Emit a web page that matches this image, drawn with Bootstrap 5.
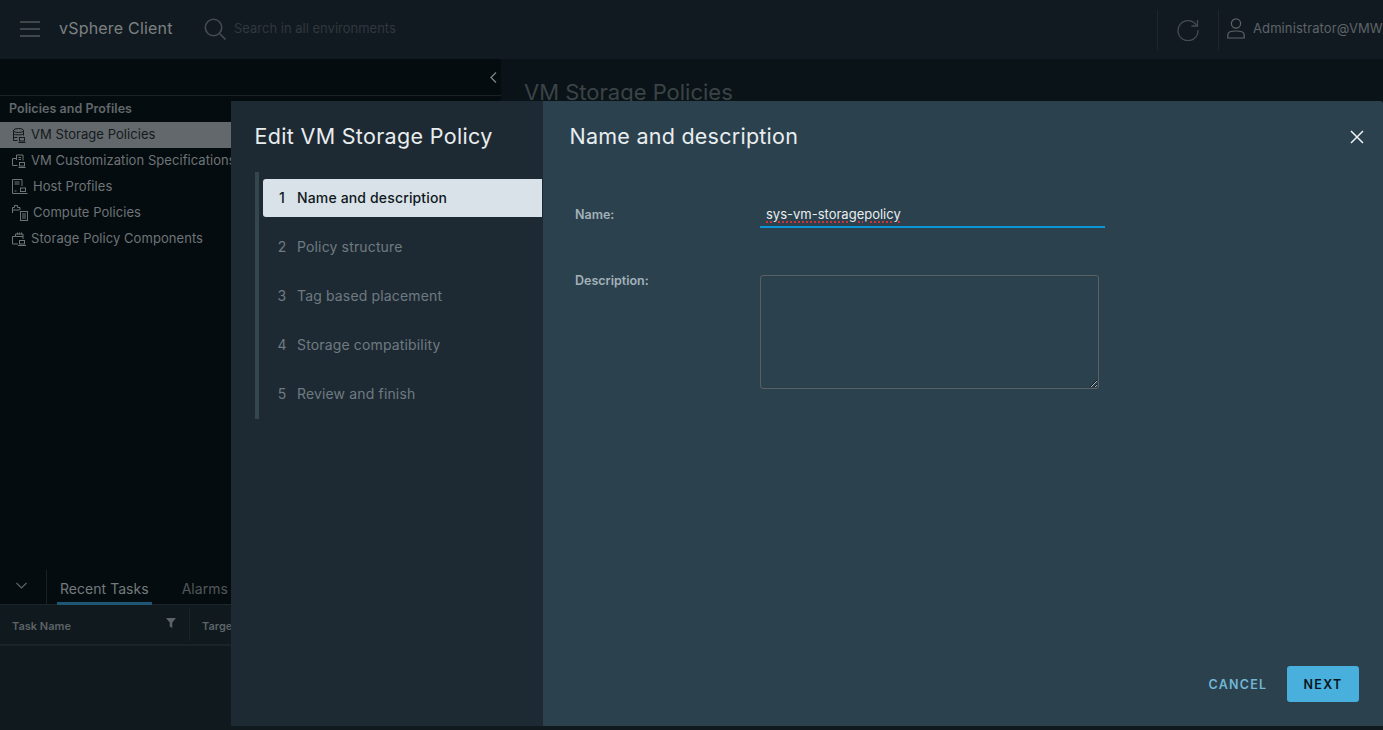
<!DOCTYPE html>
<html lang="en">
<head>
<meta charset="utf-8">
<title>Edit VM Storage Policy</title>
<link href="https://cdn.jsdelivr.net/npm/bootstrap@5.3.0/dist/css/bootstrap.min.css" rel="stylesheet">
<style>
html,body{height:100%;overflow:hidden}
body{background:#050c0f;font-family:Inter,"Noto Sans",sans-serif;color:#8b9092}
svg{display:block;flex:none;fill:none;stroke:currentColor}
.app-bar{height:59px;background:#121a21;color:#5c6366}
.menu-btn{width:59px;color:#50575a;padding-bottom:2px}
.brand{font-size:16px;color:#7c8183;letter-spacing:.2px;width:145px;padding-bottom:3px}
.search-icon{color:#454c50;margin-bottom:2px}
.search-text{font-size:13px;color:#2f383e;margin-left:8px;padding-bottom:2px}
.bar-sep{width:1px;height:40px;background:#1f272d}
.refresh{width:60px;color:#454c50}
.user{font-size:13px;color:#5e6467;white-space:nowrap;width:156px;padding-bottom:2px;letter-spacing:.1px}
.shell{height:511px}
.side{width:501px;background:#050c0f}
.collapse-row{height:37px;border-bottom:1px solid #1a2226;color:#7e8486;padding-right:4px}
.side-title{font-size:12.5px;font-weight:600;color:#62686b;padding:5px 0 5px 9px;line-height:16px;letter-spacing:.05px}
.side-item{height:26px;padding-left:12px;font-size:13px;color:#6e7477;white-space:nowrap;gap:5px;letter-spacing:.06px}
.side-item.on{background:#62686b;color:#14191c}
.content{background:#0a1317}
.content h1{font-size:22px;font-weight:400;color:#3b4347;margin:19px 0 0 23px;line-height:28px}
.dock{height:160px;background:#0f191e}
.dock-tabs{height:35px;background:#050c0f;border-bottom:1px solid #1d262b}
.dock-toggle{width:47px;border-right:1px solid #1a2226;color:#5e6467;padding:0 3px 3px 0}
.dock-tab{font-size:14px;color:#50575a;line-height:38px;height:35px;padding:0 3px;margin-left:10px;letter-spacing:.03px}
.dock-tab.on{color:#747a7d;border-bottom:3px solid #1f5673}
.dock-tab.next{margin-left:27px}
.grid-head{height:41px;border-bottom:2px solid #1a2328;font-size:11px;font-weight:600;color:#5d6366}
.cell{width:190px;padding-left:12px;padding-top:3px;color:#5d6366}
.cell.first{width:189px;padding-right:13px;padding-top:0}
.cell.first span{padding-top:3px}
.cell-sep{width:1px;height:33px;background:#1a2328}
.filter{fill:currentColor;stroke:none;margin-top:-4px}
.wizard{position:fixed;left:231px;top:101px;right:0;height:625px;background:#2b414e;border-radius:3px 3px 0 0}
.wiz-nav{width:312px;flex:none;background:#1e2a33;padding:23px 1px 0 24px}
.wiz-nav h2{font-size:21.5px;font-weight:400;color:#e9edef;line-height:24px;margin:0 0 24px -.5px;letter-spacing:.32px;white-space:nowrap}
.steps{border-left:4px solid #34474d;margin:0;padding:7px 0 0 4px;height:247px;list-style:none}
.step{height:38px;margin-bottom:11px;font-size:14px;color:#6e7a81;padding:0 0 2px 9px;white-space:nowrap;letter-spacing:.15px}
.step .n{width:20px;text-align:center;margin-right:5px}
.step.on{background:#d8e2e8;color:#10181c;border-radius:3px 0 0 3px;font-weight:500}
.wiz-body{padding:0 24px 24px 26.500px;color:#e9edef}
.wiz-body h3{font-size:21.5px;font-weight:400;line-height:24px;margin:23px 0 0;letter-spacing:.25px}
.close-x{position:absolute;right:18px;top:28px;width:16px;height:16px;padding:0;background:none;border:0;color:#eef2f4}
.f-label{width:190.500px;padding-left:5.500px;font-size:12.5px;font-weight:600;color:#a3b1b9;margin:0 0 2px}
.name-row{margin-top:51px;height:34px}
.name-input{width:345px;height:25px;margin-bottom:1px;background:transparent;border:0;border-bottom:2px solid #0b95d6;border-radius:0;padding:0 6px 2px;font-size:13px;line-height:22px;color:#e9edef;box-shadow:none}
.name-input span{text-decoration:underline dotted #d0343a 2px;text-underline-offset:2px}
.desc-row{margin-top:42px}
.desc-row .f-label{margin-top:-3px}
.desc-input{width:339px;height:114px;background:transparent;border:1px solid #5b6063;border-radius:3px;color:#e9edef;box-shadow:none}
.btn-cancel,.btn-next{font-size:12.5px;font-weight:600;letter-spacing:1.25px;height:36px;padding:2px 0 0;border-radius:3px;border:0}
.btn-cancel{color:#71b7d5;width:72px;background:none;margin-right:13px}
.btn-next{color:#0a161c;width:72px;background:#49afdd}
</style>
</head>
<body>
<header class="app-bar d-flex align-items-center">
  <div class="menu-btn d-flex justify-content-center">
    <svg width="20" height="16" viewBox="0 0 20 16" stroke-width="1.3"><path d="M0 1h20M0 8h20M0 15h20"/></svg>
  </div>
  <div class="brand">vSphere Client</div>
  <svg class="search-icon" width="22" height="22" viewBox="0 0 22 22" stroke-width="1.6"><circle cx="9.500" cy="9.500" r="8.200"/><path d="M15.500 15.500l6 6"/></svg>
  <div class="search-text flex-grow-1">Search in all environments</div>
  <div class="bar-sep"></div>
  <div class="refresh d-flex justify-content-center">
    <svg width="22" height="22" viewBox="0 0 22 22" stroke-width="1.3"><path d="M19.600 6.500A10 10 0 1 0 21 11"/><path d="M20.500 1v6h-6"/></svg>
  </div>
  <div class="bar-sep"></div>
  <div class="user d-flex align-items-center gap-2 ms-2">
    <svg width="18" height="21" viewBox="0 0 18 21" stroke-width="1.2"><circle cx="9" cy="5.500" r="4.600"/><path d="M.8 20v-3.200c0-2.400 3.400-3.800 8.200-3.800s8.200 1.400 8.200 3.800V20z"/></svg>
    <span>Administrator@VMW</span>
  </div>
</header>

<div class="shell d-flex">
  <aside class="side d-flex flex-column">
    <div class="collapse-row d-flex align-items-center justify-content-end">
      <svg width="7" height="11" viewBox="0 0 7 11" stroke-width="1.3"><path d="M6 .5L1 5.500l5 5"/></svg>
    </div>
    <div class="side-title">Policies and Profiles</div>
    <div class="side-item on d-flex align-items-center">
      <svg width="14" height="15" viewBox="0 0 14 15" stroke-width="1"><ellipse cx="6.500" cy="2.500" rx="5" ry="2"/><path d="M1.500 2.500v10h4M11.500 2.500v5M1.500 6c1.500 1.200 8.500 1.200 10 0M1.500 9.500h4"/><rect x="7.500" y="9.500" width="5" height="3.500"/><path d="M6.500 14.500h7"/></svg>
      <span>VM Storage Policies</span>
    </div>
    <div class="side-item d-flex align-items-center">
      <svg width="14" height="15" viewBox="0 0 14 15" stroke-width="1"><path d="M.5 4.500h4M.5 4.500v7h5M4.500 1h6.500v5.500M4.500 1v5"/><path d="M6.500 3.500h2.500M6.500 5.500h2.500"/><rect x="7.500" y="8.500" width="5" height="3.500"/><path d="M6.500 13.500h7"/></svg>
      <span>VM Customization Specifications</span>
    </div>
    <div class="side-item d-flex align-items-center">
      <svg width="16" height="16" viewBox="0 0 16 16" stroke-width="1"><path d="M8 14.500H.5V.5h9.500V7"/><path d="M2.500 3h5M2.500 5h5M2.500 12h2"/><rect x="8.500" y="9" width="5" height="3.500"/><path d="M7.500 14.500h8"/></svg>
      <span>Host Profiles</span>
    </div>
    <div class="side-item d-flex align-items-center">
      <svg width="16" height="16" viewBox="0 0 16 16" stroke-width="1"><path d="M.5 8V2.500h2V.5h3v2h2.500v2.500M.5 5h7"/><rect x="8.500" y="6.500" width="7" height="9"/><path d="M10 9h4M10 11h4M10 13h4"/></svg>
      <span>Compute Policies</span>
    </div>
    <div class="side-item d-flex align-items-center">
      <svg width="14" height="15" viewBox="0 0 14 15" stroke-width="1"><path d="M.5 4.500v7.500h5.500M.5 4.500h3V2h7.500v5M3.500 4.500h7.500"/><path d="M5.500.5v2M7.500.5v2M9.500.5v2"/><rect x="7.500" y="8.500" width="5" height="3.500"/><path d="M6 13.500h8"/></svg>
      <span>Storage Policy Components</span>
    </div>
  </aside>
  <main class="content flex-grow-1">
    <h1>VM Storage Policies</h1>
  </main>
</div>

<section class="dock">
  <div class="dock-tabs d-flex">
    <div class="dock-toggle d-flex align-items-center justify-content-center">
      <svg width="11" height="7" viewBox="0 0 11 7" stroke-width="1.200"><path d="M.5 1l5 5 5-5"/></svg>
    </div>
    <div class="dock-tab on">Recent Tasks</div>
    <div class="dock-tab next">Alarms</div>
  </div>
  <div class="grid-head d-flex align-items-center">
    <div class="cell first d-flex justify-content-between align-items-center">
      <span>Task Name</span>
      <svg class="filter" width="10" height="10" viewBox="0 0 10 10"><path d="M0 0h10L6.300 4.500V10L3.700 8.500V4.500z"/></svg>
    </div>
    <div class="cell-sep"></div>
    <div class="cell">Target</div>
  </div>
</section>

<div class="wizard d-flex" role="dialog" aria-label="Edit VM Storage Policy">
  <nav class="wiz-nav">
    <h2>Edit VM Storage Policy</h2>
    <ul class="steps">
      <li class="step on d-flex align-items-center"><span class="n">1</span>Name and description</li>
      <li class="step d-flex align-items-center"><span class="n">2</span>Policy structure</li>
      <li class="step d-flex align-items-center"><span class="n">3</span>Tag based placement</li>
      <li class="step d-flex align-items-center"><span class="n">4</span>Storage compatibility</li>
      <li class="step d-flex align-items-center"><span class="n">5</span>Review and finish</li>
    </ul>
  </nav>
  <div class="wiz-body flex-grow-1 d-flex flex-column">
    <h3>Name and description</h3>
    <button class="close-x" aria-label="Close"><svg width="16" height="16" viewBox="0 0 16 16" stroke-width="1.500"><path d="M2 2l12 12M14 2L2 14"/></svg></button>
    <form class="flex-grow-1 d-flex flex-column">
      <div class="name-row d-flex align-items-center">
        <label class="f-label">Name:</label>
        <div class="form-control name-input" role="textbox"><span>sys-vm-storagepolicy</span></div>
      </div>
      <div class="desc-row d-flex align-items-start">
        <label class="f-label">Description:</label>
        <textarea class="form-control desc-input"></textarea>
      </div>
      <div class="mt-auto d-flex justify-content-end align-items-center">
        <button type="button" class="btn btn-cancel">CANCEL</button>
        <button type="button" class="btn btn-next">NEXT</button>
      </div>
    </form>
  </div>
</div>
<script src="https://cdn.jsdelivr.net/npm/bootstrap@5.3.0/dist/js/bootstrap.bundle.min.js"></script>
</body>
</html>
